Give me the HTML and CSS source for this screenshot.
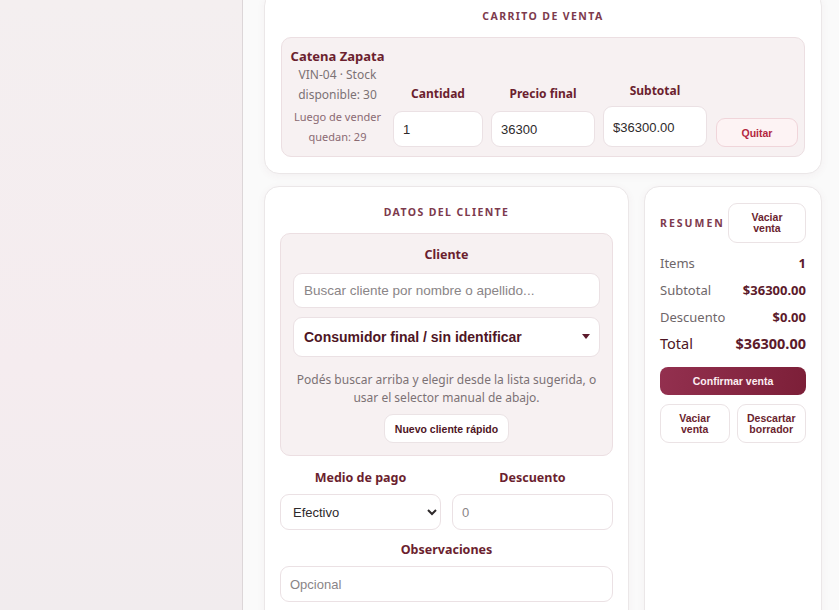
FILE: index.html
```html
<!DOCTYPE html>
<html lang="es">
<head>
  <meta charset="UTF-8" />
  <meta name="viewport" content="width=device-width, initial-scale=1.0" />
  <title>Nueva venta</title>
  <link rel="stylesheet" href="styles.css">
</head>
<body>
  <div class="layout">
    <aside class="sidebar"></aside>

    <main class="main">
      <section class="card cart-card">
        <h2 class="card-title">Carrito de venta</h2>
        <div class="cart-item">
          <div class="item-info">
            <div class="item-name">Catena Zapata</div>
            <div class="item-meta">VIN-04 · Stock disponible: 30</div>
            <div class="item-left">Luego de vender quedan: 29</div>
          </div>
          <div class="field field-qty">
            <label>Cantidad</label>
            <input class="input" type="text" value="1" />
          </div>
          <div class="field field-price">
            <label>Precio final</label>
            <input class="input" type="text" value="36300" />
          </div>
          <div class="field field-sub">
            <label>Subtotal</label>
            <div class="input subtotal">$36300.00</div>
          </div>
          <button class="btn btn-remove">Quitar</button>
        </div>
      </section>

      <div class="bottom-row">
        <section class="card client-card">
          <h2 class="card-title">Datos del cliente</h2>
          <div class="client-box">
            <label class="field-label">Cliente</label>
            <input class="input search" type="text" placeholder="Buscar cliente por nombre o apellido..." />
            <div class="select-wrap">
              <select class="client-select">
                <option>Consumidor final / sin identificar</option>
              </select>
            </div>
            <p class="hint">Podés buscar arriba y elegir desde la lista sugerida, o usar el selector manual de abajo.</p>
            <button class="btn btn-small">Nuevo cliente rápido</button>
          </div>

          <div class="pay-grid">
            <div class="field">
              <label>Medio de pago</label>
              <select class="input pay-select">
                <option>Efectivo</option>
              </select>
            </div>
            <div class="field">
              <label>Descuento</label>
              <input class="input" type="text" placeholder="0" />
            </div>
          </div>

          <div class="field notes">
            <label>Observaciones</label>
            <input class="input" type="text" placeholder="Opcional" />
          </div>
        </section>

        <section class="card summary-card">
          <div class="summary-head">
            <h2 class="card-title">Resumen</h2>
            <button class="btn btn-box">Vaciar<br>venta</button>
          </div>
          <div class="sum-row"><span>Items</span><b>1</b></div>
          <div class="sum-row"><span>Subtotal</span><b>$36300.00</b></div>
          <div class="sum-row"><span>Descuento</span><b>$0.00</b></div>
          <div class="sum-row total"><span>Total</span><b>$36300.00</b></div>
          <button class="btn btn-primary">Confirmar venta</button>
          <div class="sum-actions">
            <button class="btn btn-box">Vaciar<br>venta</button>
            <button class="btn btn-box">Descartar<br>borrador</button>
          </div>
        </section>
      </div>
    </main>
  </div>
</body>
</html>
```

FILE: styles.css
```css
* {
  box-sizing: border-box;
}
html, body {
  margin: 0;
  padding: 0;
  height: 100%;
  overflow: hidden;
}
body {
  font-family: 'Noto Sans', 'DejaVu Sans', sans-serif;
  color: #5c1a2b;
  background: #fafafa;
}
.layout {
  display: flex;
  height: 610px;
}
.sidebar {
  width: 243px;
  flex: none;
  background: linear-gradient(180deg, #f4eff0 0%, #f5ecef 60%, #f1ecee 100%);
  border-right: 1px solid #dcd6d8;
}
.main {
  flex: 1;
  min-width: 0;
  padding: 0 17px 0 21px;
  margin-top: -9px;
}
.card {
  background: #fff;
  border: 1px solid #ebe7e8;
  border-radius: 15px;
  box-shadow: 0 2px 8px rgba(120, 60, 80, 0.05);
}
.card-title {
  margin: 0;
  text-align: center;
  font-size: 10.5px;
  font-weight: 700;
  letter-spacing: 1.4px;
  text-transform: uppercase;
  color: #7d3a4d;
  line-height: 14px;
}

/* carrito */
.cart-card {
  padding: 17px 16px 16px;
}
.cart-item {
  margin-top: 14px;
  display: flex;
  align-items: flex-end;
  gap: 8px;
  background: #f7f1f2;
  border: 1px solid #ecdfe2;
  border-radius: 10px;
  padding: 9px 8px;
}
.item-info {
  width: 95px;
  flex: none;
  text-align: center;
  font-size: 12px;
  color: #7c7275;
  line-height: 20px;
}
.item-name {
  font-size: 13px;
  font-weight: 700;
  color: #6b1f2f;
  line-height: 18px;
}
.item-left {
  margin-top: 2px;
  font-size: 11px;
  color: #8a6a72;
}
.field {
  display: flex;
  flex-direction: column;
}
.field label,
.field-label {
  text-align: center;
  font-size: 12px;
  font-weight: 700;
  color: #6b1f2f;
  line-height: 16px;
  margin-bottom: 9px;
}
.field-qty { width: 90px; flex: none; }
.field-price { width: 104px; flex: none; }
.field-sub { width: 104px; flex: none; }
.field-sub label { margin-bottom: 7px; }
.input {
  height: 36px;
  border: 1px solid #ebe1e4;
  border-radius: 9px;
  background: #fff;
  padding: 0 9px;
  font-family: 'Liberation Sans', Arial, sans-serif;
  font-size: 13px;
  color: #2e2a2b;
  outline: none;
  width: 100%;
}
.input::placeholder {
  color: #8a8587;
}
.subtotal {
  height: 41px;
  padding-top: 13px;
  line-height: 16px;
}
.btn {
  font-family: 'Liberation Sans', Arial, sans-serif;
  font-weight: 700;
  cursor: pointer;
  background: #fff;
  border: 1px solid #ebe3e5;
  color: #6b1f2f;
}
.btn-remove {
  width: 82px;
  flex: none;
  height: 29px;
  border-radius: 9px;
  background: #fdf3f4;
  border-color: #f0d5da;
  color: #b3263f;
  font-size: 10.5px;
  margin-left: 1px;
}

/* fila inferior */
.bottom-row {
  display: flex;
  gap: 15px;
  margin-top: 12px;
  align-items: flex-start;
}
.client-card {
  width: 365px;
  height: 440px;
  padding: 18px 15px 0;
}
.client-box {
  margin-top: 14px;
  background: #f7f1f2;
  border: 1px solid #ecdfe2;
  border-radius: 10px;
  padding: 13px 12px 12px;
  display: flex;
  flex-direction: column;
  align-items: center;
}
.client-box .field-label {
  margin-bottom: 10px;
  font-size: 12.5px;
}
.search {
  height: 35px;
  padding: 0 10px;
  font-size: 13.5px;
}
.select-wrap {
  position: relative;
  width: 100%;
  margin-top: 9px;
}
.select-wrap::after {
  content: "";
  position: absolute;
  right: 10px;
  top: 17px;
  border-left: 4px solid transparent;
  border-right: 4px solid transparent;
  border-top: 5px solid #5c1a2b;
}
.client-select {
  appearance: none;
  -webkit-appearance: none;
  width: 100%;
  height: 40px;
  border: 1px solid #ebe1e4;
  border-radius: 9px;
  background: #fff;
  padding: 0 10px;
  font-family: 'Liberation Sans', Arial, sans-serif;
  font-size: 14px;
  font-weight: 700;
  color: #4e1524;
  outline: none;
}
.hint {
  margin: 14px 0 0;
  text-align: center;
  font-size: 12px;
  line-height: 18px;
  color: #7c7275;
}
.btn-small {
  margin-top: 7px;
  height: 29px;
  padding: 0 10px;
  border-radius: 9px;
  font-size: 10.5px;
  color: #4e1524;
}
.pay-grid {
  display: grid;
  grid-template-columns: 1fr 1fr;
  gap: 11px;
  margin-top: 14px;
}
.pay-grid .field label,
.notes label {
  font-size: 12.5px;
  margin-bottom: 8px;
}
.pay-select {
  padding: 0 8px;
  color: #2e2a2b;
}
.notes {
  margin-top: 12px;
}

/* resumen */
.summary-card {
  width: 178px;
  height: 440px;
  padding: 16px 15px 0;
}
.summary-head {
  display: flex;
  align-items: center;
  justify-content: space-between;
  margin-bottom: 7px;
}
.summary-head .card-title {
  letter-spacing: 2px;
}
.btn-box {
  width: 78px;
  height: 40px;
  border-radius: 9px;
  font-size: 10.5px;
  line-height: 11px;
}
.sum-row {
  display: flex;
  justify-content: space-between;
  align-items: baseline;
  font-size: 13px;
  line-height: 27px;
  color: #6e6669;
}
.sum-row b {
  color: #5c1a2b;
}
.sum-row.total {
  font-size: 14.5px;
  color: #4e1524;
  line-height: 25px;
}
.btn-primary {
  width: 100%;
  height: 28px;
  margin-top: 11px;
  border: none;
  border-radius: 8px;
  background: linear-gradient(100deg, #93304f 0%, #7c1f38 100%);
  color: #fdeef2;
  font-size: 10.5px;
}
.sum-actions {
  display: flex;
  gap: 7px;
  margin-top: 9px;
}
.sum-actions .btn-box {
  width: 70px;
  height: 39px;
}
```
